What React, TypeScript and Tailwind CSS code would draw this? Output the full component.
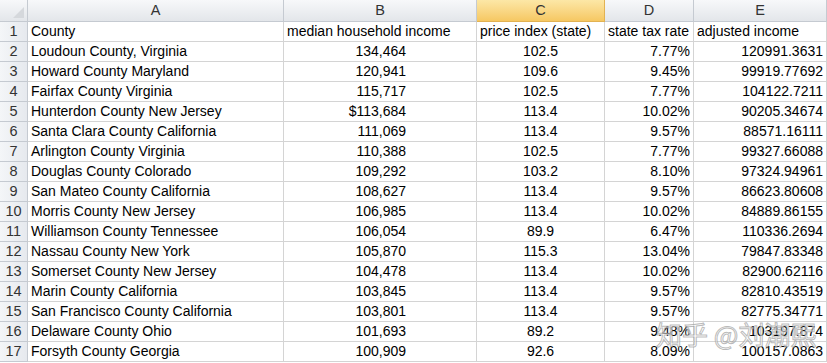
const rows: [string, string, string, string, string][] = [
  ['Loudoun County, Virginia', '134,464', '102.5', '7.77%', '120991.3631'],
  ['Howard County Maryland', '120,941', '109.6', '9.45%', '99919.77692'],
  ['Fairfax County Virginia', '115,717', '102.5', '7.77%', '104122.7211'],
  ['Hunterdon County New Jersey', '$113,684', '113.4', '10.02%', '90205.34674'],
  ['Santa Clara County California', '111,069', '113.4', '9.57%', '88571.16111'],
  ['Arlington County Virginia', '110,388', '102.5', '7.77%', '99327.66088'],
  ['Douglas County Colorado', '109,292', '103.2', '8.10%', '97324.94961'],
  ['San Mateo County California', '108,627', '113.4', '9.57%', '86623.80608'],
  ['Morris County New Jersey', '106,985', '113.4', '10.02%', '84889.86155'],
  ['Williamson County Tennessee', '106,054', '89.9', '6.47%', '110336.2694'],
  ['Nassau County New York', '105,870', '115.3', '13.04%', '79847.83348'],
  ['Somerset County New Jersey', '104,478', '113.4', '10.02%', '82900.62116'],
  ['Marin County California', '103,845', '113.4', '9.57%', '82810.43519'],
  ['San Francisco County California', '103,801', '113.4', '9.57%', '82775.34771'],
  ['Delaware County Ohio', '101,693', '89.2', '9.48%', '103197.874'],
  ['Forsyth County Georgia', '100,909', '92.6', '8.09%', '100157.0863'],
];

const cols = ['A', 'B', 'C', 'D', 'E'];

const cell = 'h-[20px] border-r border-b border-[#d4d4d4] px-[3px] leading-[19px] whitespace-nowrap overflow-hidden';
const rowHead =
  'h-[20px] border-r border-b border-[#c5cad1] bg-gradient-to-r from-[#f4f6f8] to-[#e6e9ee] text-center text-[14.5px] leading-[19px] text-[#333]';

export default function App() {
  return (
    <div className="relative h-[363px] w-[827px] overflow-hidden bg-white font-['Liberation_Sans',Arial,sans-serif] text-[14px] text-black">
      <div className="grid grid-cols-[28px_256px_193px_128px_89px_133px]">
        {/* corner */}
        <div className="relative h-[22px] border-r border-b border-[#c5cad1] bg-gradient-to-b from-[#f7f8fa] to-[#e3e6ea]">
          <div className="absolute right-[3px] bottom-[3px] h-0 w-0 border-l-[11px] border-b-[11px] border-l-transparent border-b-[#d5d8dc]" />
        </div>
        {cols.map((c) => (
          <div
            key={c}
            className={
              c === 'C'
                ? 'h-[22px] border-r border-b border-[#e2b252] bg-gradient-to-b from-[#fce7a6] to-[#f6c862] text-center text-[14.5px] leading-[21px] text-[#333]'
                : 'h-[22px] border-r border-b border-[#c5cad1] bg-gradient-to-b from-[#f7f8fa] to-[#e3e6ea] text-center text-[14.5px] leading-[21px] text-[#333]'
            }
          >
            {c}
          </div>
        ))}

        <div className={rowHead}>1</div>
        <div className={cell}>County</div>
        <div className={cell}>median household income</div>
        <div className={cell}>price index (state)</div>
        <div className={cell}>state tax rate</div>
        <div className={cell}>adjusted income</div>

        {rows.map((r, i) => (
          <div key={i} className="contents">
            <div className={rowHead}>{i + 2}</div>
            <div className={cell}>{r[0]}</div>
            <div className={cell + ' pr-[70px] text-right'}>{r[1]}</div>
            <div className={cell + ' text-center'}>{r[2]}</div>
            <div className={cell + ' text-right'}>{r[3]}</div>
            <div className={cell + ' text-right'}>{r[4]}</div>
          </div>
        ))}
      </div>

      <div className="pointer-events-none absolute top-[318px] left-[656px] font-['Noto_Sans_CJK_SC',sans-serif] text-[26px] leading-[32px] whitespace-nowrap text-white/60 [-webkit-text-stroke:1px_rgba(140,140,140,0.6)]">
        知乎 @刘潮熙
      </div>
    </div>
  );
}
